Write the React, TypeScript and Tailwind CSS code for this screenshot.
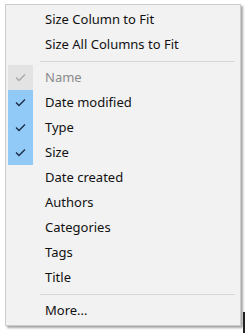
import React from "react";

type Item = { label: string; state?: "none" | "disabled" | "checked" };

const Check = ({ color }: { color: string }) => (
  <svg width="11" height="9" viewBox="0 0 11 9" fill="none">
    <path d="M1 4.5 L4 7.5 L10 1.5" stroke={color} strokeWidth="1.3" />
  </svg>
);

const Row = ({ item }: { item: Item }) => {
  const st = item.state ?? "none";
  return (
    <div className="flex h-[25px] items-center">
      <div
        className={
          "flex h-full w-[25px] items-center justify-center " +
          (st === "checked" ? "bg-[#91c9f7]" : st === "disabled" ? "bg-[#e3e3e3]" : "")
        }
      >
        {st === "checked" && <Check color="#1b2a45" />}
        {st === "disabled" && <Check color="#a8a8a8" />}
      </div>
      <span
        className={
          "ml-[12px] text-[13px] leading-none " +
          (st === "disabled" ? "text-[#8a8a8a]" : "text-[#111111]")
        }
      >
        {item.label}
      </span>
    </div>
  );
};

const Sep = () => (
  <div className="flex h-[8px] items-center pl-[32px] pr-[3px]">
    <div className="h-px w-full bg-[#d7d7d7]" />
  </div>
);

export default function App() {
  const top: Item[] = [{ label: "Size Column to Fit" }, { label: "Size All Columns to Fit" }];
  const cols: Item[] = [
    { label: "Name", state: "disabled" },
    { label: "Date modified", state: "checked" },
    { label: "Type", state: "checked" },
    { label: "Size", state: "checked" },
    { label: "Date created" },
    { label: "Authors" },
    { label: "Categories" },
    { label: "Tags" },
    { label: "Title" },
  ];
  return (
    <div
      className="relative h-[333px] w-[252px] bg-white pl-[5px] pt-[4px]"
      style={{ fontFamily: '"Noto Sans", "Open Sans", sans-serif' }}
    >
      <div className="w-[236px] border border-[#cccccc] bg-[#f2f2f2] px-[2px] pt-[2px] pb-[2px] shadow-[2px_2px_2px_rgba(0,0,0,0.35)]">
        {top.map((i) => (
          <Row key={i.label} item={i} />
        ))}
        <Sep />
        {cols.map((i) => (
          <Row key={i.label} item={i} />
        ))}
        <Sep />
        <Row item={{ label: "More..." }} />
      </div>
      <div className="absolute left-[243px] top-[312px] h-[21px] w-[2px] bg-[#222]" />
    </div>
  );
}
